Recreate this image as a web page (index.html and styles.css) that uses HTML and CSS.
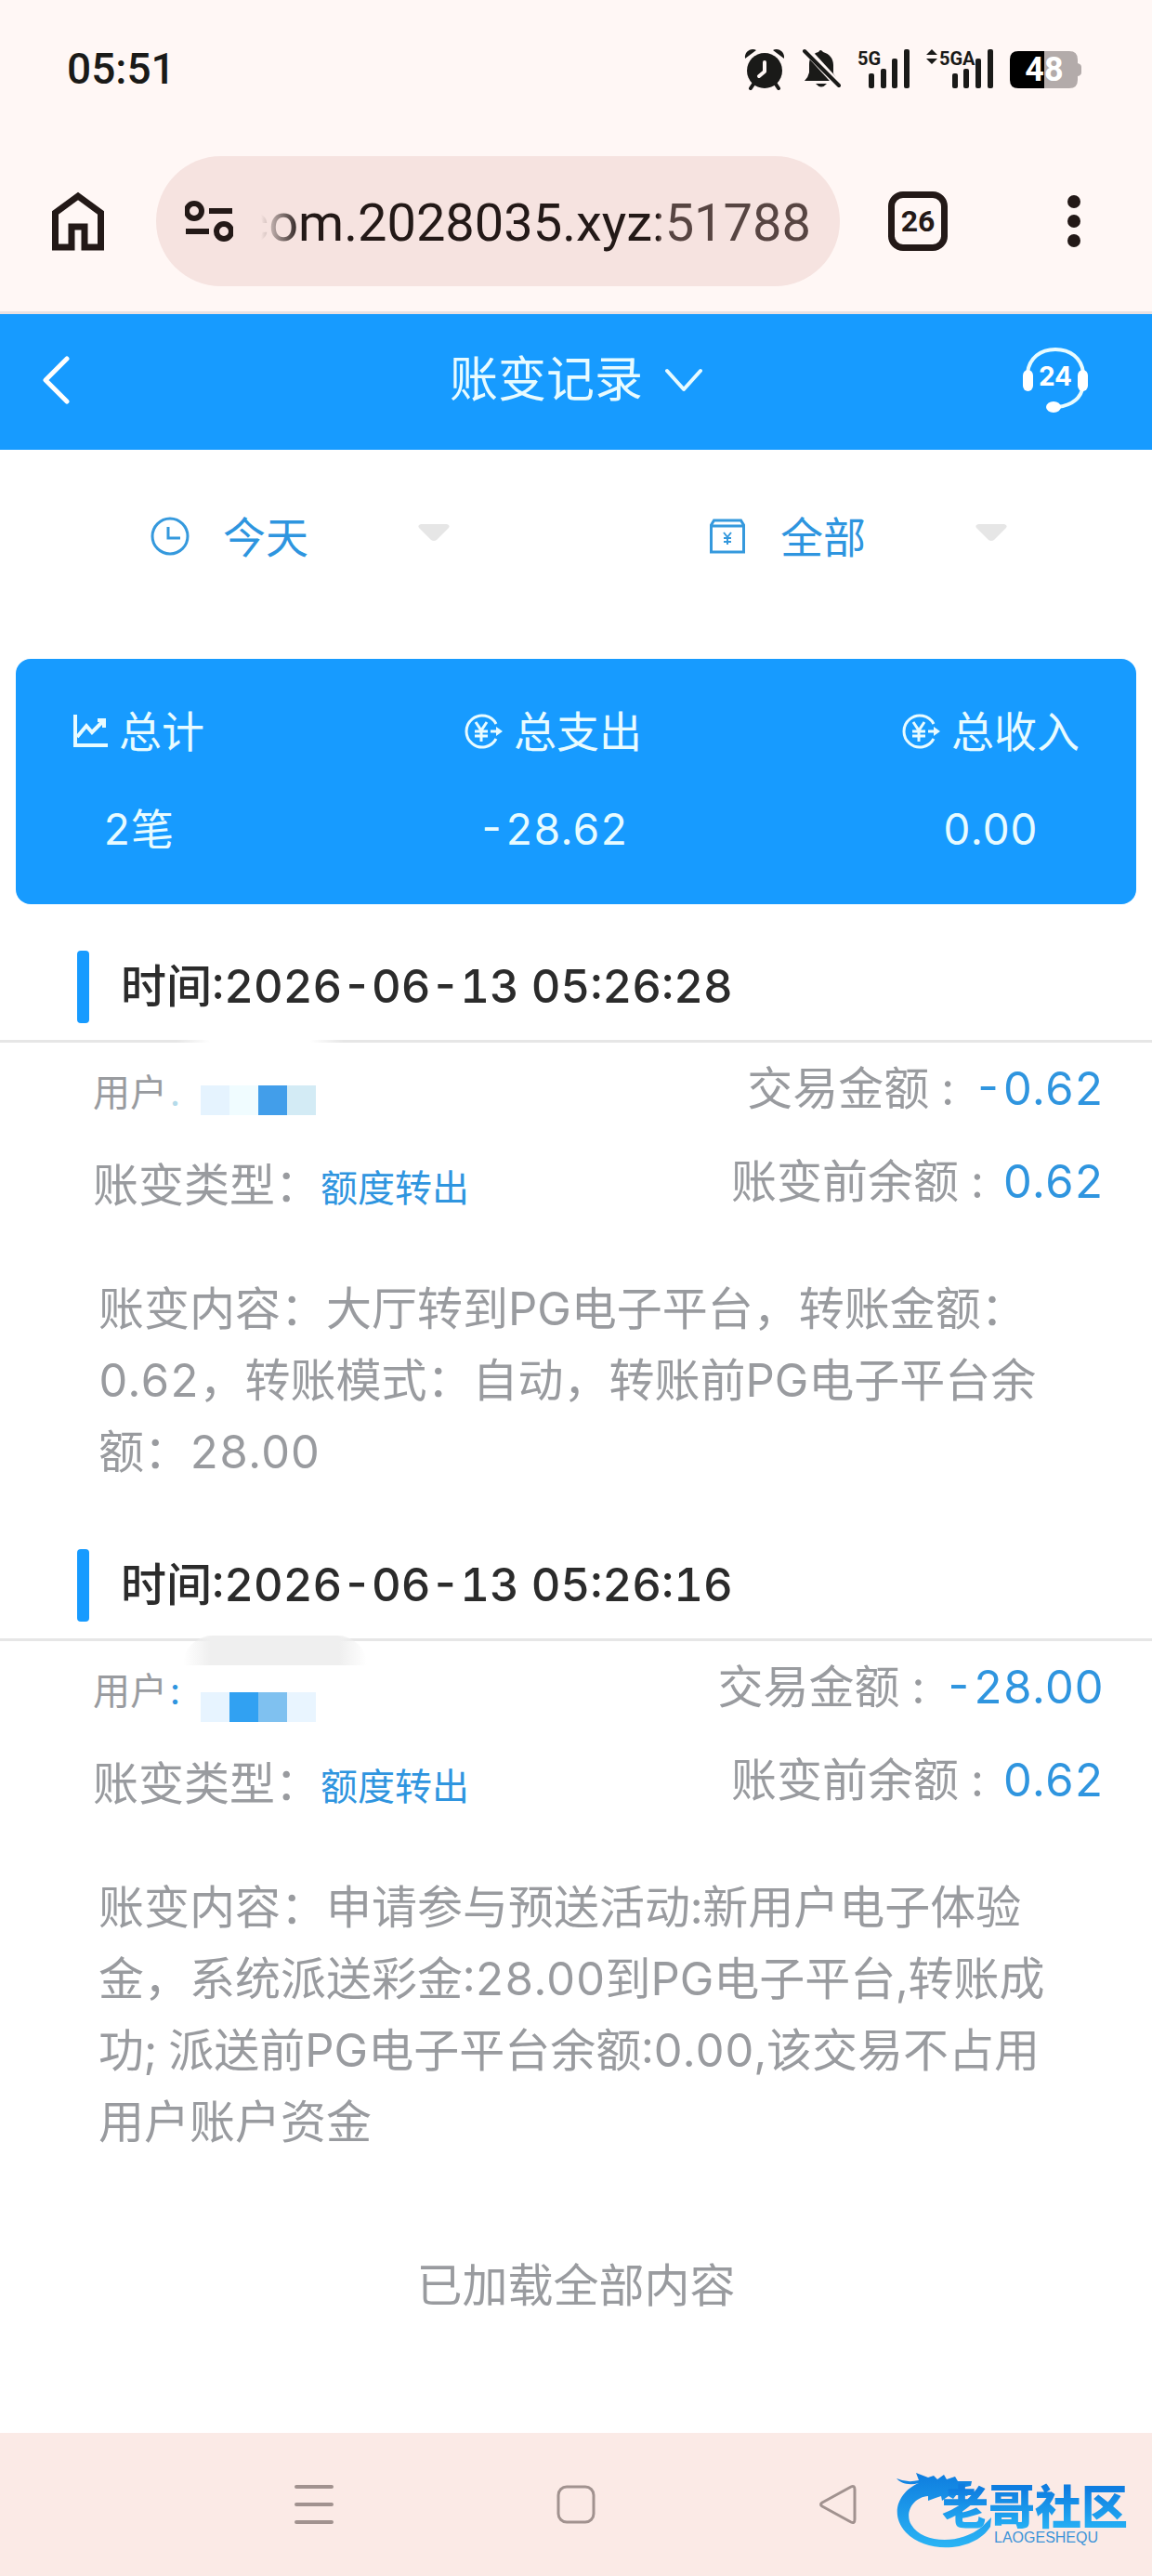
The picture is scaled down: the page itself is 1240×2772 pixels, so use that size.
FILE: index.html
```html
<!DOCTYPE html>
<html lang="zh-CN">
<head>
    <meta charset="UTF-8">
    <meta name="viewport" content="width=device-width, initial-scale=1.0">
    <title>账变记录</title>
    <link rel="stylesheet" href="styles.css">
</head>
<body>
    <div class="status-bar">
        <span class="clock">05:51</span>
        <div class="status-icons">
            <svg width="44" height="46" viewBox="0 0 44 46" fill="#1a1a18">
                <circle cx="22" cy="25" r="19"/>
                <path d="M1 12C0 5 7 0 13 3zM43 12C44 5 37 0 31 3z"/>
                <path d="M11 38l-4 6M33 38l4 6" stroke="#1a1a18" stroke-width="4" stroke-linecap="round"/>
                <path d="M22 16v10l-6 5" fill="none" stroke="#fff7f5" stroke-width="4" stroke-linecap="round" stroke-linejoin="round"/>
            </svg>
            <svg width="42" height="46" viewBox="0 0 42 46" fill="#1a1a18">
                <path d="M18 5q2-4 5 0c7 2 11 7 11 14v9l5 8H3q4-4 5-9v-8C8 11 11 7 18 5zM15 39h12q-6 7-12 0z"/>
                <path d="M5 3l35 38" stroke="#fff7f5" stroke-width="8"/>
                <path d="M3 4l37 37" stroke="#1a1a18" stroke-width="4" stroke-linecap="round"/>
            </svg>
            <svg width="56" height="46" viewBox="0 0 56 46" fill="#1a1a18">
                <text class="net" x="0" y="19">5G</text>
                <rect x="12" y="28" width="6" height="16" rx="2"/>
                <rect x="25" y="23" width="6" height="21" rx="2"/>
                <rect x="37" y="12" width="6" height="32" rx="2"/>
                <rect x="50" y="2" width="6" height="42" rx="2"/>
            </svg>
            <svg width="72" height="46" viewBox="0 0 72 46" fill="#1a1a18">
                <path d="M0 8l6-6 6 6zM0 12h12l-6 6z"/>
                <text class="net" x="14" y="19">5GA</text>
                <rect x="28" y="28" width="6" height="16" rx="2"/>
                <rect x="40" y="23" width="6" height="21" rx="2"/>
                <rect x="53" y="12" width="6" height="32" rx="2"/>
                <rect x="66" y="2" width="6" height="42" rx="2"/>
            </svg>
            <svg width="78" height="46" viewBox="0 0 78 46">
                <path d="M37 4h27q9 0 9 9v4q4 1 4 4v6q0 3-4 4v4q0 9-9 9H37z" fill="#b3abaa"/>
                <path d="M9 4h28v40H9q-9 0-9-9V13q0-9 9-9z" fill="#000"/>
                <text class="level" x="37" y="36">48</text>
            </svg>
        </div>
    </div>

    <div class="browser-bar">
        <button class="home" aria-label="主页">
            <svg width="56" height="64" viewBox="0 0 56 64" fill="none" stroke="#231917" stroke-width="7">
                <path d="M3.500 60V23L28 5l24.500 18v37H35V38H21v22z"/>
            </svg>
        </button>
        <div class="address">
            <svg width="52" height="46" viewBox="0 0 52 46" fill="none" stroke="#231917" stroke-width="6">
                <circle cx="10" cy="12" r="8"/>
                <path d="M26 12h25M1 34h25"/>
                <circle cx="42" cy="34" r="8"/>
            </svg>
            <input class="url" type="text" value="com.2028035.xyz:51788" aria-label="网址">
        </div>
        <button class="tabs">26</button>
        <button class="menu" aria-label="菜单">
            <svg width="14" height="56" viewBox="0 0 14 56" fill="#231917">
                <circle cx="7" cy="7" r="7"/><circle cx="7" cy="28" r="7"/><circle cx="7" cy="49" r="7"/>
            </svg>
        </button>
    </div>

    <header class="page-head">
        <button class="back" aria-label="返回">
            <svg width="30" height="52" viewBox="0 0 30 52" fill="none" stroke="#fff" stroke-width="5" stroke-linecap="round" stroke-linejoin="round">
                <path d="M26 3L3 26l23 23"/>
            </svg>
        </button>
        <button class="title">账变记录
            <svg width="40" height="26" viewBox="0 0 40 26" fill="none" stroke="#e8fbff" stroke-width="4" stroke-linecap="round" stroke-linejoin="round">
                <path d="M2 3l18 20L38 3"/>
            </svg>
        </button>
        <button class="service" aria-label="客服">
            <svg width="72" height="72" viewBox="0 0 72 72">
                <path d="M6 28C8 12 20 3 36 3s28 9 30 25M66 42C64 54 56 63 38 65" fill="none" stroke="#e8fbff" stroke-width="4"/>
                <rect x="1" y="25" width="11" height="23" rx="6" fill="#fff"/>
                <rect x="60" y="25" width="11" height="23" rx="6" fill="#fff"/>
                <ellipse cx="34" cy="65" rx="8" ry="6" fill="#fff"/>
                <text class="hours" x="36" y="42">24</text>
            </svg>
        </button>
    </header>

    <main>
        <div class="filters">
            <label class="filter">
                <svg width="42" height="42" viewBox="0 0 42 42" fill="none" stroke="#3599dd" stroke-width="3">
                    <circle cx="21" cy="21" r="19"/>
                    <path d="M19 11v12h13"/>
                </svg>
                <select aria-label="日期"><option>今天</option></select>
                <svg class="caret" width="34" height="20" viewBox="0 0 34 20"><path d="M3 1h28q4 1 2 4L20 18q-3 2-6 0L1 5q-2-3 2-4z" fill="#e6e6e6"/></svg>
            </label>
            <label class="filter">
                <svg width="42" height="42" viewBox="0 0 42 42" fill="none" stroke="#3599dd" stroke-width="3">
                    <path d="M3.500 9l3-5h29l3 5v29h-35zM3 10h36"/>
                    <path d="M17 17l4 5 4-5M21 22v8M17 23h8M17 27h8" stroke-width="2"/>
                </svg>
                <select aria-label="类型"><option>全部</option></select>
                <svg class="caret" width="34" height="20" viewBox="0 0 34 20"><path d="M3 1h28q4 1 2 4L20 18q-3 2-6 0L1 5q-2-3 2-4z" fill="#e6e6e6"/></svg>
            </label>
        </div>

        <section class="summary">
            <div class="total">
                <div class="total-label">
                    <svg width="38" height="38" viewBox="0 0 38 38" fill="none" stroke="#e8fbff" stroke-width="4">
                        <path d="M3 1v33h35M5 25l10-12 6 7L33 8M27 7h7v8"/>
                    </svg>总计
                </div>
                <div class="total-value">2笔</div>
            </div>
            <div class="total">
                <div class="total-label">
                    <svg width="42" height="38" viewBox="0 0 42 38" fill="none" stroke="#e8fbff" stroke-width="3">
                        <path d="M35 11A17 17 0 1 0 35 27M13 9l6 9 6-9M19 18v12M12 19h14M12 24h14M29 19h8"/>
                        <path d="M35 14l7 5-7 5z" fill="#e8fbff" stroke="none"/>
                    </svg>总支出
                </div>
                <div class="total-value">-28.62</div>
            </div>
            <div class="total">
                <div class="total-label">
                    <svg width="42" height="38" viewBox="0 0 42 38" fill="none" stroke="#e8fbff" stroke-width="3">
                        <path d="M35 11A17 17 0 1 0 35 27M13 9l6 9 6-9M19 18v12M12 19h14M12 24h14M29 19h8"/>
                        <path d="M35 14l7 5-7 5z" fill="#e8fbff" stroke="none"/>
                    </svg>总收入
                </div>
                <div class="total-value">0.00</div>
            </div>
        </section>

        <section class="record">
            <h2 class="time">时间:2026-06-13 05:26:28</h2>
            <div class="detail">
                <div class="left">
                    <div class="user">用户<span class="dot faded">.</span>
                        <span class="mosaic first"><i></i><i></i><i></i><i></i></span>
                    </div>
                    <div class="row">账变类型：<span class="type">额度转出</span></div>
                </div>
                <div class="right">
                    <div class="row">交易金额 : <span class="amount">-0.62</span></div>
                    <div class="row">账变前余额 : <span class="amount">0.62</span></div>
                </div>
            </div>
            <p class="content">账变内容：大厅转到PG电子平台，转账金额：0.62，转账模式：自动，转账前PG电子平台余额：28.00</p>
        </section>

        <section class="record smudged">
            <h2 class="time">时间:2026-06-13 05:26:16</h2>
            <div class="detail">
                <div class="left">
                    <div class="user">用户<span class="dot">:</span>
                        <span class="mosaic second"><i></i><i></i><i></i><i></i></span>
                    </div>
                    <div class="row">账变类型：<span class="type">额度转出</span></div>
                </div>
                <div class="right">
                    <div class="row">交易金额 : <span class="amount">-28.00</span></div>
                    <div class="row">账变前余额 : <span class="amount">0.62</span></div>
                </div>
            </div>
            <p class="content">账变内容：申请参与预送活动:新用户电子体验金，系统派送彩金:28.00到PG电子平台,转账成功; 派送前PG电子平台余额:0.00,该交易不占用用户账户资金</p>
        </section>

        <p class="end">已加载全部内容</p>
    </main>

    <nav class="nav-bar">
        <button aria-label="最近任务">
            <svg width="44" height="44" viewBox="0 0 44 44" stroke="#a1928f" stroke-width="4" stroke-linecap="round">
                <path d="M3 3h38M3 22h38M3 41h38"/>
            </svg>
        </button>
        <button aria-label="主屏幕">
            <svg width="44" height="44" viewBox="0 0 44 44" fill="none" stroke="#a1928f" stroke-width="3">
                <rect x="3" y="3" width="38" height="38" rx="9"/>
            </svg>
        </button>
        <button aria-label="后退">
            <svg width="44" height="44" viewBox="0 0 44 44" fill="none" stroke="#a1928f" stroke-width="3" stroke-linejoin="round">
                <path d="M36 3Q40 1 40 6v32q0 5-4 3L5 24q-3-2 0-4z"/>
            </svg>
        </button>
        <svg class="logo" width="262" height="92" viewBox="0 0 262 92">
            <defs>
                <linearGradient id="blue" gradientUnits="userSpaceOnUse" x1="0" y1="10" x2="0" y2="88">
                    <stop offset="0" stop-color="#0f7fe0"/>
                    <stop offset="1" stop-color="#2bb5f5"/>
                </linearGradient>
                <linearGradient id="word" gradientUnits="userSpaceOnUse" x1="0" y1="24" x2="0" y2="66">
                    <stop offset="0" stop-color="#0f7de0"/>
                    <stop offset="1" stop-color="#25aff4"/>
                </linearGradient>
            </defs>
            <path fill="url(#blue)" d="M1 13q11 5 24 2l-3-8 13 5 6-2 4 4 7-5 3 5 9-3 3 5 15 0-1 5-11 2 10 5-3 4-11-2-4 5-5-3-7 5-1-5-6 2-8 3 0-5C19 33 9 50 17 63c12 20 52 22 76 2l10-10-1 10C86 91 35 96 11 71-8 50 5 26 25 18 14 21 5 18 1 13z"/>
            <text class="logo-word" x="50" y="62" fill="url(#word)">老哥社区</text>
            <text class="logo-latin" x="106" y="82" fill="#3b93d8">LAOGESHEQU</text>
        </svg>
    </nav>
</body>
</html>
```
FILE: styles.css
```css
* {
    box-sizing: border-box;
}
body {
    margin: 0;
    min-height: 100vh;
    display: flex;
    flex-direction: column;
    background: #fff;
    font-family: Inter, "Noto Sans CJK SC", sans-serif;
    font-variant-numeric: tabular-nums;
    color: #999b9f;
}
svg {
    display: block;
    flex: none;
}
button {
    padding: 0;
    border: none;
    background: none;
    font: inherit;
    color: inherit;
    cursor: pointer;
}

/* phone status bar */
.status-bar {
    height: 140px;
    padding: 8px 75px 0 72px;
    display: flex;
    justify-content: space-between;
    align-items: center;
    background: #fff7f5;
    color: #1a1a18;
}
.clock {
    font: 500 46px/60px Roboto, sans-serif;
}
.status-icons {
    display: flex;
    gap: 18px;
}
.net {
    font: 700 20px Roboto, sans-serif;
}
.level {
    font: 700 36px Roboto, sans-serif;
    fill: #fff;
    text-anchor: middle;
}

/* browser toolbar */
.browser-bar {
    height: 198px;
    padding: 0 44px 0 56px;
    display: flex;
    align-items: center;
    background: #fff7f5;
    border-bottom: 3px solid #e9e1e3;
    color: #231917;
}
.address {
    flex: 1;
    min-width: 0;
    height: 140px;
    margin: 0 52px 0 56px;
    padding: 0 31px;
    display: flex;
    align-items: center;
    border-radius: 70px;
    background: #f6e3e0;
}
.url {
    flex: 1;
    min-width: 0;
    padding: 4px 0 0;
    border: none;
    outline: none;
    text-align: right;
    font: 400 56px/72px Roboto, sans-serif;
    color: transparent;
    /* fades in on the left, lighter port number on the right */
    background: linear-gradient(90deg, transparent 30px, #231917 72px, #231917 calc(100% - 164px), #574542 calc(100% - 164px));
    -webkit-background-clip: text;
    background-clip: text;
}
.tabs {
    flex: none;
    width: 64px;
    height: 64px;
    border: 7px solid #231917;
    border-radius: 16px;
    font: 700 32px/48px Roboto, sans-serif;
}
.menu {
    flex: none;
    width: 80px;
    margin-left: 96px;
    display: flex;
    justify-content: center;
}

/* page header */
.page-head {
    height: 146px;
    padding: 0 46px 4px;
    display: grid;
    grid-template-columns: 1fr auto 1fr;
    align-items: center;
    background: #179bff;
    color: #e8fbff;
}
.title {
    display: flex;
    align-items: center;
    gap: 24px;
    font-size: 52px;
    line-height: 60px;
}
.back {
    justify-self: start;
}
.service {
    justify-self: end;
    margin-right: 22px;
}
.hours {
    font: 700 28px Inter, sans-serif;
    fill: #fff;
    text-anchor: middle;
}

main {
    flex: 1;
}
.filters {
    height: 186px;
    padding: 0 20px;
    display: flex;
    align-items: center;
}
.filter {
    flex: 1;
    padding-left: 142px;
    display: flex;
    align-items: center;
}
.filter select {
    appearance: none;
    width: 210px;
    margin-left: 36px;
    padding: 0 0 4px;
    border: none;
    background: none;
    font: 46px/60px "Noto Sans CJK SC", sans-serif;
    color: #2e95df;
}
.caret {
    margin-bottom: 8px;
}

.summary {
    margin: 39px 17px 0;
    padding: 48px 61px 51px;
    display: flex;
    justify-content: space-between;
    border-radius: 16px;
    background: #179bff;
    color: #e8fbff;
    font-size: 46px;
    line-height: 60px;
}
.total {
    display: flex;
    flex-direction: column;
    align-items: center;
    gap: 45px;
}
.total-label {
    display: flex;
    align-items: center;
    gap: 12px;
}

/* records */
.record {
    padding: 50px 0 16px;
}
.time {
    margin: 0;
    padding: 0 83px 18px;
    display: flex;
    align-items: center;
    gap: 34px;
    border-bottom: 3px solid #e6e6e6;
    font-size: 49px;
    font-weight: 500;
    line-height: 78px;
    color: #2b2b2b;
}
.time::before {
    content: "";
    width: 13px;
    height: 78px;
    border-radius: 4px;
    background: #179bff;
}
.detail {
    position: relative;
    padding: 20px 52px 0 100px;
    display: flex;
    justify-content: space-between;
    font-size: 49px;
    line-height: 60px;
}
.left, .right {
    display: flex;
    flex-direction: column;
    gap: 40px;
}
.left {
    padding-top: 4px;
}
.right {
    text-align: right;
}
.row, .user {
    height: 60px;
}
.user, .type {
    font-size: 40px;
}
.user {
    display: flex;
}
.type, .amount, .dot {
    color: #2f95df;
}
.amount {
    margin-left: 8px;
}
.dot {
    width: 36px;
    padding-left: 3px;
}
.faded {
    color: #b5dbea;
}
.mosaic {
    display: flex;
    height: 32px;
}
.mosaic i {
    width: 31px;
}
.first {
    margin-top: 22px;
}
.second {
    margin-top: 31px;
}
.first i:nth-child(1) { background: #e5f3fe; }
.first i:nth-child(2) { background: #f0fcff; }
.first i:nth-child(3) { background: #429eea; }
.first i:nth-child(4) { background: #d3ebf5; }
.second i:nth-child(1) { background: #e7f4ff; }
.second i:nth-child(2) { background: #31a1f2; }
.second i:nth-child(3) { background: #7fc1f0; }
.second i:nth-child(4) { background: #e9f5ff; }

/* erased patch over the divider */
.detail::before {
    content: "";
    position: absolute;
    left: 190px;
    top: -3px;
    width: 180px;
    height: 3px;
    background: linear-gradient(90deg, transparent, #fff 20%, #fff 80%, transparent);
}
.smudged .detail::before {
    left: 197px;
    top: -6px;
    width: 198px;
    height: 32px;
    border-radius: 40px 40px 0 0;
    background: linear-gradient(90deg, transparent, #efefef 15%, #efefef 85%, transparent);
}
.content {
    margin: 64px 106px 0;
    font-size: 49px;
    line-height: 77px;
}
.end {
    margin: 0;
    padding: 92px 0 128px;
    text-align: center;
    font-size: 49px;
    line-height: 60px;
}

/* system navigation */
.nav-bar {
    position: relative;
    height: 154px;
    padding: 0 316px;
    display: flex;
    justify-content: space-between;
    align-items: center;
    background: #fbeae6;
}
.logo {
    position: absolute;
    right: 14px;
    top: 36px;
}
.logo-word {
    font: 900 50px "Noto Sans CJK SC", sans-serif;
}
.logo-latin {
    font: 16px "Liberation Sans", sans-serif;
}
```
